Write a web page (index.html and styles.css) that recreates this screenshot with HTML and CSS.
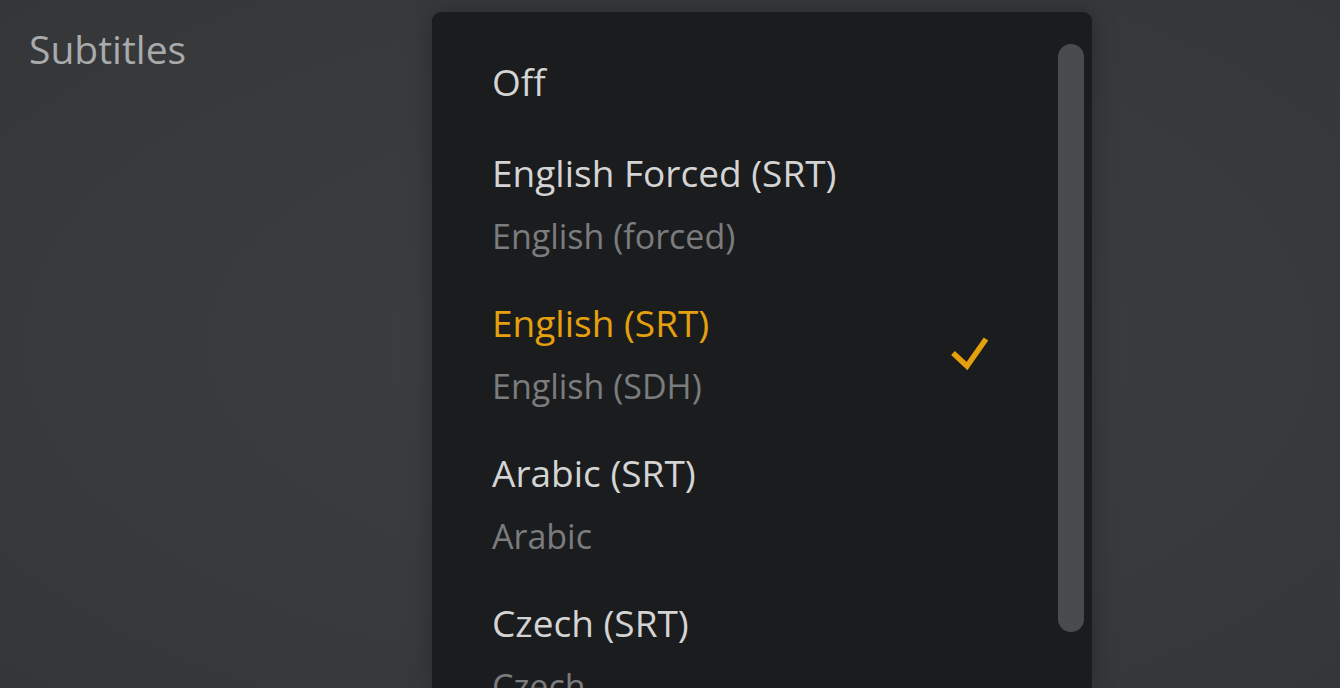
FILE: index.html
```html
<!DOCTYPE html>
<html>
<head>
<meta charset="utf-8">
<link rel="stylesheet" href="styles.css">
</head>
<body>
<div class="screen">
  <div class="label">Subtitles</div>
  <div class="menu">
    <ul class="list">
      <li class="item single"><span class="title">Off</span></li>
      <li class="item"><span class="title">English Forced (SRT)</span><span class="sub">English (forced)</span></li>
      <li class="item selected"><span class="title">English (SRT)</span><span class="sub">English (SDH)</span>
        <svg class="check" viewBox="0 0 40 34" width="40" height="34"><path d="M2 16 L16 29 L35 2" fill="none" stroke="#e5a00d" stroke-width="5.5" stroke-linecap="butt" stroke-linejoin="miter"/></svg>
      </li>
      <li class="item"><span class="title">Arabic (SRT)</span><span class="sub">Arabic</span></li>
      <li class="item"><span class="title">Czech (SRT)</span><span class="sub">Czech</span></li>
    </ul>
    <div class="scroll"><div class="thumb"></div></div>
  </div>
</div>
</body>
</html>
```
FILE: styles.css
```css
html, body {
  margin: 0;
  padding: 0;
  height: 100%;
  overflow: hidden;
}
body {
  background: radial-gradient(ellipse at 50% 50%, #3c3e3f 0%, #38393a 70%, #343637 100%);
  font-family: "Open Sans", "Noto Sans", sans-serif;
}
.screen {
  display: flex;
  align-items: flex-start;
  height: 688px;
  padding: 12px 0 0 0;
  box-sizing: border-box;
  overflow: hidden;
}
.label {
  width: 432px;
  padding: 22px 0 0 29px;
  box-sizing: border-box;
  color: #a9aaab;
  font-size: 39px;
  line-height: 30px;
}
.menu {
  width: 660px;
  height: 676px;
  background: #1b1c1e;
  border-radius: 9px 9px 0 0;
  box-shadow: 0 0 24px rgba(0,0,0,0.25);
  display: flex;
  position: relative;
  overflow: hidden;
}
.list {
  list-style: none;
  margin: 0;
  padding: 50px 0 0 60px;
  flex: 1;
}
.item {
  position: relative;
  display: flex;
  flex-direction: column;
  height: 150px;
}
.item.single {
  height: 91px;
}
.title {
  color: #d4d4d4;
  font-size: 37px;
  line-height: 40px;
}
.sub {
  color: #7b7c7d;
  font-size: 34px;
  line-height: 40px;
  margin-top: 23px;
}
.selected .title {
  color: #e5a00d;
}
.check {
  position: absolute;
  left: 459px;
  top: 34px;
}
.scroll {
  width: 26px;
  padding: 32px 8px 0 0;
}
.thumb {
  width: 26px;
  height: 588px;
  border-radius: 13px;
  background: #4a4b4d;
}
```
